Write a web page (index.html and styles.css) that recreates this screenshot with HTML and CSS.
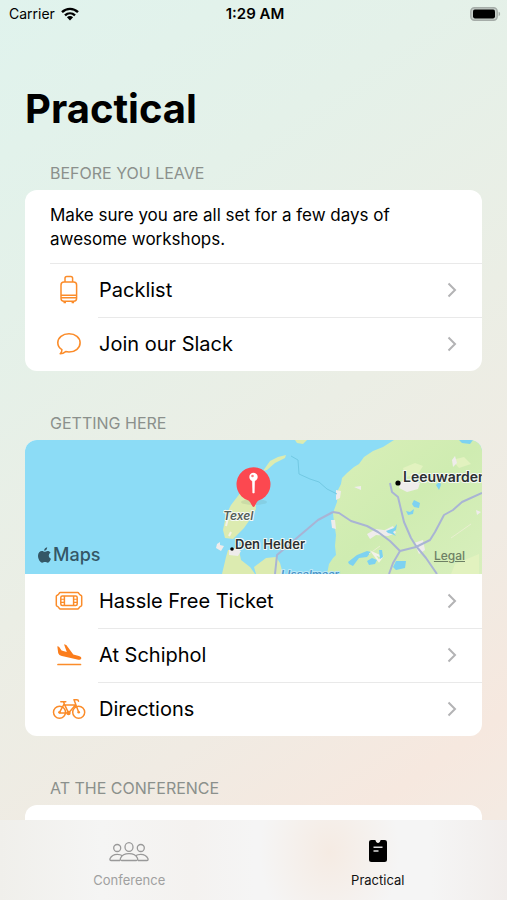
FILE: index.html
```html
<!DOCTYPE html>
<html lang="en">
<head>
    <meta charset="UTF-8">
    <meta name="viewport" content="width=device-width, initial-scale=1.0">
    <title>Practical</title>
    <link rel="stylesheet" href="styles.css">
</head>
<body>

    <header class="status-bar">
        <div class="carrier">
            <span>Carrier</span>
            <svg width="18" height="14" viewBox="0 0 18 14">
                <g fill="none" stroke="#000" stroke-width="2.4">
                    <path d="M1 5.2C5.6.8 12.4.8 17 5.2"/>
                    <path d="M4 8.4c2.9-2.7 7.1-2.7 10 0"/>
                </g>
                <path d="M5.9 10.3c1.8-1.6 4.4-1.6 6.2 0L9 13.6z"/>
            </svg>
        </div>
        <time class="clock">1:29 AM</time>
        <div class="battery">
            <svg width="31" height="14" viewBox="0 0 31 14">
                <rect x=".8" y=".8" width="26.4" height="12.4" rx="3.6" fill="#c6cec9" stroke="#a5aca8" stroke-width="1.4"/>
                <rect x="3" y="2.600" width="22" height="8.800" rx="1.8"/>
                <path d="M28.6 4.8c2 .6 2 3.8 0 4.4z" fill="#a5aca8"/>
            </svg>
        </div>
    </header>

    <main class="content">
        <h1>Practical</h1>

        <section>
            <h2>BEFORE YOU LEAVE</h2>
            <div class="card">
                <p class="intro">Make sure you are all set for a few days of awesome workshops.</p>
                <a class="row first" href="#packlist">
                    <svg class="icon" viewBox="0 0 36 30">
                        <g fill="none" stroke="#fb8c2a" stroke-width="1.5">
                            <rect x="10" y="7" width="15.600" height="19.200" rx="3"/>
                            <path d="M14 7V3.300q0-1.800 1.800-1.800h4q1.800 0 1.800 1.800V7M10 20.200h15.600M10 22.800h15.600"/>
                            <path d="M12.500 27.400h2.500M20.600 27.400h2.500" stroke-width="1.600"/>
                        </g>
                    </svg>
                    <span class="label">Packlist</span>
                    <svg class="chevron" viewBox="0 0 10 16"><path d="M1.5 1.5 8 8l-6.5 6.5"/></svg>
                </a>
                <a class="row" href="#slack">
                    <svg class="icon" viewBox="0 0 36 30">
                        <path d="M18 4.8c6.4 0 11.1 3.9 11.1 9S24.4 23 18 23c-1.3 0-2.2-.1-3.3-.4-1.7 1.3-3.4 2.1-5.5 2.2 1.2-1.2 1.8-2.2 1.7-4.2C8.3 19 6.8 16.7 6.8 13.8c0-5.1 4.8-9 11.2-9z" fill="none" stroke="#fb8c2a" stroke-width="1.6" stroke-linejoin="round"/>
                    </svg>
                    <span class="label">Join our Slack</span>
                    <svg class="chevron" viewBox="0 0 10 16"><path d="M1.5 1.5 8 8l-6.5 6.5"/></svg>
                </a>
            </div>
        </section>

        <section>
            <h2>GETTING HERE</h2>
            <div class="card">
                <div class="map">
                    <svg class="map-canvas" viewBox="0 0 457 134" preserveAspectRatio="xMidYMid slice">
                        <defs>
                            <linearGradient id="land" x1="0" y1="0" x2="1" y2="1">
                                <stop offset="0" stop-color="#d9efb8"/>
                                <stop offset=".5" stop-color="#cfecb1"/>
                                <stop offset="1" stop-color="#d8efbd"/>
                            </linearGradient>
                        </defs>
                        <rect width="457" height="134" fill="#8cdcf6"/>
                        <!-- land -->
                        <path d="M369 0 358 7l-10 4-9 6-5 7-5 3-7 6-5 5-1 6-3 6-1 12-4 11 1 9 2 13-1 11 1 9-3 3-4 6-2 10h155V0z" fill="url(#land)"/>
                        <g fill="#dcebb0">
                            <path d="m216 52-10 13-5 10-3 15 2 8 8 1 5-5 6-6 7-10 5-9-1-14zM238 31l7-10 8-4 8-2-1 3-10 5-8 7zM270 0h12l-4 4-6-1z"/>
                            <path d="m197 134 4-17 2-7h11l2 10 9 7 5 7zM229 127l12-9 10-1 4 6 3 11h-27z"/>
                        </g>
                        <path d="m378 28 12-5 8 3-5 8-12 3zM427 20l12-3 7 7-12 4zM430 124l24-10v20h-28z" fill="#e2f2bf"/>
                        <path d="m375 42 8-3 12 4-2 6-11 3-8-4zM342 94l9-5 15 2-3 5-12-1-6 4zM360 90l8-4 3 7-8 3zM311 50l5 1-1 7-4 2zM306 80h4l1 9-4-1zM329 47l7-1v4zM389 103l9-3 2 10-6 4zM427 20l3-4 2 7-4 4zM451 70l5 2-4 3zM192 104l3-2v3l4 1-3 5-5-3zM204 110l7-2 5 3-3 5-9-1z" fill="#efeceb"/>
                        <path d="m200 70 3 8-2 8M204 96l2-4M348 113l9 4-3 4z" fill="none" stroke="#f4f2e9" stroke-width="2"/>
                        <!-- lakes -->
                        <path d="m361 91 8-3 3-4-1 6-3 2 3 4-4-2-4-1zM323 122l9-7 10-4 4 1-4 5-8 1-6 8-4-2zM342 121l5-3 5 2-2 4-6 1zM354 110h3l1 7-3 2zM371 121h10l-1 7-9 2-3-3zM381 71l4 1 4-3-1 5-5 1zM389 60l6 3-1 5-5-1-2-3zM411 45l4-4 1 4-2 5zM434 0h14l-3 4-8-1z" fill="#7dd2f1"/>
                        <!-- roads -->
                        <g fill="none" stroke="#a9b4d4" stroke-width="2" stroke-linejoin="round">
                            <path d="m308 72 6 1 12 8 16 5 11 6 12 9 10 10-7 12-4 11M375 111l16-4 14-7 5-8 9-17 9-5 9-8 20-9M365 43l2 9 6 5 6 25 7 16 5 8 10 12 11 16"/>
                            <path d="m250 134 2-19 21-18 20-17 15-8"/>
                        </g>
                        <path d="m266 16 7 4 1 14 11 5 9 3 8 7 10 5" fill="none" stroke="#72c9e3" stroke-width="1"/>
                        <path d="m344 114 11-8M426 98l20-14" fill="none" stroke="#e9efd0" stroke-width="1"/>
                        <!-- places -->
                        <circle cx="207" cy="109" r="1.800"/>
                        <circle cx="373" cy="43" r="2.600"/>
                        <g class="place">
                            <text x="210" y="109">Den Helder</text>
                            <text x="378" y="42" class="city">Leeuwarden</text>
                            <text x="198" y="80" class="island">Texel</text>
                            <text x="256" y="138" class="water">IJsselmeer</text>
                        </g>
                        <!-- pin -->
                        <ellipse cx="229" cy="62" rx="13" ry="3" fill="#55745f" opacity=".12"/>
                        <path d="M228.500 67c-1.500 0-2-4-5-6.500a17 17 0 1 1 10 0c-3 2.500-3.500 6.500-5 6.500z" fill="#fc4850"/>
                        <circle cx="228.500" cy="37" r="4.200" fill="#fff"/>
                        <circle cx="227.500" cy="36" r="1.300" fill="#fc7a7e"/>
                        <path d="M227.400 41h2.200l-.4 12h-1.400z" fill="#fff" stroke="#fff" stroke-width=".6"/>
                    </svg>
                    <div class="map-brand">
                        <svg width="13" height="16" viewBox="0 0 13 16">
                            <path d="M9.200.2c.1 1.900-1.300 3.500-3 3.500C6 2 7.400.4 9.200.2zM6.700 4.800c.7 0 1.500-.9 2.900-.9 1.200 0 2.300.6 3 1.600-2.600 1.600-2.200 5.200.4 6.300-.6 1.700-1.800 3.900-3.200 3.900-1 0-1.500-.6-2.800-.6s-1.800.6-2.800.6C2.100 15.700 0 12 0 8.800 0 5.700 1.900 4 3.900 4c1.200 0 2.200.8 2.800.8z" fill="#345766"/>
                        </svg>
                        <span>Maps</span>
                    </div>
                    <a class="legal" href="#legal">Legal</a>
                </div>
                <a class="row" href="#ticket">
                    <svg class="icon" viewBox="0 0 36 30">
                        <g fill="none" stroke="#fb8c2a" stroke-width="1.500">
                            <path d="M9.300 6.600h17.400c.7 0 .9.400 1.200.9.400.8 1 1.400 1.800 1.700.6.300 1 .6 1 1.300v8.600c0 .7-.4 1-1 1.300-.8.300-1.400.9-1.800 1.700-.3.500-.5.900-1.200.9H9.300c-.7 0-.9-.4-1.200-.9-.4-.8-1-1.400-1.800-1.700-.6-.3-1-.6-1-1.300v-8.600c0-.7.400-1 1-1.300.8-.3 1.400-.9 1.800-1.700.3-.5.500-.9 1.200-.9z"/>
                            <rect x="9.800" y="10" width="16.400" height="9.600" rx="1.500"/>
                            <path d="M13.400 10v9.600M22.600 10v9.600"/>
                            <path d="M10 13.200h3M10 16.400h3M23 13.200h3M23 16.400h3" stroke-width="1.100"/>
                        </g>
                    </svg>
                    <span class="label">Hassle Free Ticket</span>
                    <svg class="chevron" viewBox="0 0 10 16"><path d="M1.500 1.500 8 8l-6.500 6.500"/></svg>
                </a>
                <a class="row" href="#schiphol">
                    <svg class="icon" viewBox="0 0 36 30">
                        <path d="M6.300 6.300l1.700.4 2.600 3.900 5.200 1.300-2.800-7.600 2.300.6 7 9.500 5.600 1.500c1.700.5 2.700 1.500 2.400 2.500-.4 1.200-2.200 1.500-4 1L10.900 16c-2-.6-3.200-1.300-3.700-3z" fill="#fb7d1c"/>
                        <path d="M7 24.500h22.500" stroke="#fb8c2a" stroke-width="1.700" stroke-linecap="round"/>
                    </svg>
                    <span class="label">At Schiphol</span>
                    <svg class="chevron" viewBox="0 0 10 16"><path d="M1.500 1.500 8 8l-6.500 6.500"/></svg>
                </a>
                <a class="row" href="#directions">
                    <svg class="icon" viewBox="0 0 36 30">
                        <g fill="none" stroke="#fb8c2a" stroke-width="1.500" stroke-linecap="round" stroke-linejoin="round">
                            <circle cx="8.500" cy="18.300" r="6"/>
                            <circle cx="27.700" cy="18.300" r="6"/>
                            <path d="M8.500 18.300l4.700-8.400 4.300 9H8.500M17.500 18.900l7-7.800H13.800M27.700 18.300L23 5.800h2.800q1.700 0 1.700 1.500M13.300 9.900l-.8-2.100M9.800 7.800h5"/>
                        </g>
                        <circle cx="17.500" cy="19" r="2.200" fill="#fb8c2a"/>
                        <circle cx="8.500" cy="18.300" r="1.300" fill="#fb8c2a"/>
                        <circle cx="27.700" cy="18.300" r="1.300" fill="#fb8c2a"/>
                    </svg>
                    <span class="label">Directions</span>
                    <svg class="chevron" viewBox="0 0 10 16"><path d="M1.500 1.500 8 8l-6.500 6.500"/></svg>
                </a>
            </div>
        </section>

        <section>
            <h2>AT THE CONFERENCE</h2>
            <div class="card card-empty"></div>
        </section>
    </main>

    <nav class="tab-bar">
        <a class="tab" href="#conference">
            <svg width="40" height="24" viewBox="0 0 40 24">
                <g fill="none" stroke="#999" stroke-width="1.300">
                    <ellipse cx="20" cy="7" rx="4" ry="4.400"/>
                    <circle cx="8.200" cy="8" r="3.500"/>
                    <circle cx="31.800" cy="8" r="3.500"/>
                    <path d="M12.700 20.500c-1.500 0-1.700-1-1.200-2.200 1.300-3 4.400-4.600 8.500-4.600s7.200 1.600 8.500 4.600c.5 1.200.3 2.200-1.200 2.200z"/>
                    <path d="M11 20.500H2.200c-1.300 0-1.500-1-1.100-2 1.200-2.600 3.700-4.200 7.100-4.200 2.200 0 3.900.5 5.300 1.500M29 20.500h8.800c1.300 0 1.500-1 1.100-2-1.200-2.600-3.700-4.200-7.100-4.200-2.200 0-3.900.5-5.300 1.500"/>
                </g>
            </svg>
            <span>Conference</span>
        </a>
        <a class="tab active" href="#practical">
            <svg width="40" height="24" viewBox="0 0 40 24">
                <path d="M13.500 0H17c.5 0 .6.300.7.800.3 1.300 1.100 2.200 2.300 2.200s2-.9 2.300-2.200c.1-.5.200-.8.700-.8h3.500c1.700 0 2.500.8 2.500 2.500v17c0 1.700-.8 2.500-2.500 2.500h-13c-1.700 0-2.500-.8-2.500-2.500v-17C11 .8 11.800 0 13.500 0z"/>
                <path d="M15.500 7.300h9M15.500 11h5" stroke="#ddd" stroke-width="1.500"/>
            </svg>
            <span>Practical</span>
        </a>
    </nav>

</body>
</html>
```
FILE: styles.css
```css
* {
    box-sizing: border-box;
}
body {
    font-family: Inter, "Liberation Sans", sans-serif;
    margin: 0;
    height: 100vh;
    display: flex;
    flex-direction: column;
    overflow: hidden;
    color: #000;
    background: linear-gradient(145deg, #e0f3ed 0%, #e4f1e9 25%, #ebeee5 50%, #f0ebe3 70%, #f6e8df 85%, #f2ece5 100%);
}
a {
    color: inherit;
    text-decoration: none;
}
.status-bar {
    display: grid;
    grid-template-columns: 1fr auto 1fr;
    align-items: center;
    height: 27px;
    padding: 0 6px 0 9px;
    font-size: 14px;
}
.carrier {
    display: flex;
    align-items: center;
    gap: 6px;
}
.clock {
    font-size: 15px;
    font-weight: 600;
}
.battery {
    display: flex;
    justify-content: flex-end;
}
.content {
    flex: 1;
    min-height: 0;
    overflow: hidden;
    padding: 57px 25px 0;
}
h1 {
    margin: 0;
    font-size: 40px;
    line-height: 50px;
    font-weight: 700;
}
h2 {
    margin: 0;
    padding: 0 25px;
    font-size: 16px;
    line-height: 20px;
    font-weight: 400;
    color: #8b908c;
}
section {
    display: flex;
    flex-direction: column;
    gap: 7px;
    margin-bottom: 42px;
}
h1 + section {
    margin-top: 29px;
}
.card {
    background: #fff;
    border-radius: 12px;
    overflow: hidden;
}
.card-empty {
    height: 100px;
}
.intro {
    margin: 0;
    padding: 13px 60px 12px 25px;
    font-size: 17px;
    line-height: 24px;
}
.row {
    display: flex;
    align-items: center;
    height: 54px;
    padding: 0 25px 0 26px;
    position: relative;
}
.row + .row::before,
.row.first::before {
    content: "";
    position: absolute;
    top: 0;
    left: 73px;
    right: 0;
    height: 1px;
    background: #e9e9e9;
}
.row.first::before {
    left: 25px;
}
.icon {
    width: 36px;
    height: 30px;
}
.label {
    flex: 1;
    padding-left: 12px;
    font-size: 20px;
}
.chevron {
    width: 10px;
    height: 16px;
    fill: none;
    stroke: #b3b3b5;
    stroke-width: 2;
}
.map {
    position: relative;
    height: 134px;
}
.map-canvas {
    display: block;
    width: 100%;
    height: 100%;
}
.place {
    font-size: 13px;
    font-weight: 600;
    fill: #2b2f31;
    stroke: #f5faf4;
    stroke-width: 2px;
    stroke-linejoin: round;
    paint-order: stroke;
}
.city {
    font-size: 14px;
}
.island {
    font-size: 12px;
    font-style: italic;
    fill: #56615a;
}
.water {
    font-size: 11px;
    font-style: italic;
    fill: #4b96c8;
    stroke: #bfe9f7;
}
.map-brand {
    position: absolute;
    left: 13px;
    bottom: 8px;
    display: flex;
    align-items: center;
    gap: 2px;
    font-size: 18px;
    line-height: 22px;
    font-weight: 500;
    color: #345766;
}
.legal {
    position: absolute;
    right: 17px;
    bottom: 10px;
    font-size: 12px;
    line-height: 16px;
    font-weight: 500;
    color: #6d8065;
    text-decoration: underline;
}
.tab-bar {
    display: flex;
    height: 80px;
    padding: 0 5px;
    background:
        radial-gradient(ellipse 70px 90px at 65% 40%, #f5ebe3, #f5ebe300),
        linear-gradient(90deg, #f0efeb, #f5f5f4 20%, #f4f2f0 38%, #f5f5f5 50%, #f5f5f5 85%, #f1edeb);
}
.tab {
    flex: 1;
    display: flex;
    flex-direction: column;
    align-items: center;
    gap: 8px;
    padding-top: 20px;
    font-size: 13px;
    line-height: 16px;
    color: #a0a0a0;
}
.tab.active {
    color: #111;
}
```
